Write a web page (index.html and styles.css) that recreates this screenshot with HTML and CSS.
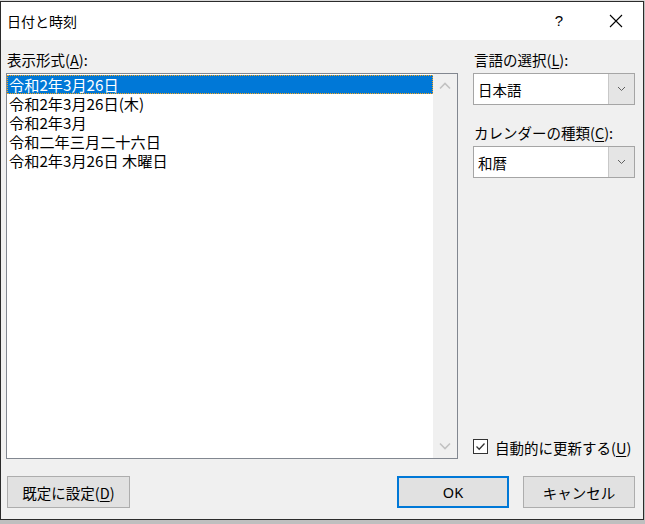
FILE: index.html
```html
<!DOCTYPE html>
<html lang="ja">
<head>
<meta charset="utf-8">
<title>日付と時刻</title>
<link rel="stylesheet" href="styles.css">
</head>
<body>
<div class="backdrop"></div>
<div class="dialog">
  <div class="titlebar">
    <div class="title">日付と時刻</div>
    <div class="tb-help">?</div>
    <div class="tb-close">
      <svg width="14" height="14" viewBox="0 0 14 14"><path d="M1 1 L13 13 M13 1 L1 13" stroke="#000" stroke-width="1.1" fill="none"/></svg>
    </div>
  </div>
  <div class="body">
    <div class="left">
      <div class="label">表示形式(<u>A</u>):</div>
      <div class="listbox">
        <div class="items">
          <div class="item selected">令和2年3月26日</div>
          <div class="item">令和2年3月26日(木)</div>
          <div class="item">令和2年3月</div>
          <div class="item">令和二年三月二十六日</div>
          <div class="item">令和2年3月26日 木曜日</div>
        </div>
        <div class="scrollbar">
          <div class="sb-btn">
            <svg width="12" height="8" viewBox="0 0 12 8"><polyline points="1,6.5 6,1.5 11,6.5" stroke="#c2c2c2" stroke-width="1.6" fill="none"/></svg>
          </div>
          <div class="sb-track"></div>
          <div class="sb-btn">
            <svg width="12" height="8" viewBox="0 0 12 8"><polyline points="1,1.5 6,6.5 11,1.5" stroke="#c2c2c2" stroke-width="1.6" fill="none"/></svg>
          </div>
        </div>
      </div>
    </div>
    <div class="right">
      <div class="label">言語の選択(<u>L</u>):</div>
      <div class="combo">
        <div class="combo-text">日本語</div>
        <div class="combo-btn">
          <svg width="9" height="6" viewBox="0 0 9 6"><polyline points="1,1 4.5,4.5 8,1" stroke="#606060" stroke-width="1" fill="none"/></svg>
        </div>
      </div>
      <div class="label label2">カレンダーの種類(<u>C</u>):</div>
      <div class="combo">
        <div class="combo-text">和暦</div>
        <div class="combo-btn">
          <svg width="9" height="6" viewBox="0 0 9 6"><polyline points="1,1 4.5,4.5 8,1" stroke="#606060" stroke-width="1" fill="none"/></svg>
        </div>
      </div>
      <div class="spacer"></div>
      <div class="check-row">
        <div class="checkbox">
          <svg width="13" height="13" viewBox="0 0 13 13"><polyline points="2.5,6.5 5.2,9.2 10.5,3.5" stroke="#333" stroke-width="1.3" fill="none"/></svg>
        </div>
        <div class="check-label">自動的に更新する(<u>U</u>)</div>
      </div>
    </div>
    <div class="buttons">
      <div class="btn btn-default">既定に設定(<u>D</u>)</div>
      <div class="btn-group">
        <div class="btn btn-ok">OK</div>
        <div class="btn">キャンセル</div>
      </div>
    </div>
  </div>
</div>
</body>
</html>
```
FILE: styles.css
```css
html, body {
  margin: 0;
  padding: 0;
}
body {
  width: 645px;
  height: 524px;
  background: #bfbfbf;
  font-family: "Noto Sans CJK JP", "Noto Sans", sans-serif;
  color: #000;
  overflow: hidden;
  position: relative;
}
.backdrop {
  height: 1px;
  background: #d9d9d9;
}
.dialog {
  width: 642px;
  height: 517px;
  border: 1px solid #2b2b2b;
  display: flex;
  flex-direction: column;
  background: #f0f0f0;
}
.titlebar {
  height: 38px;
  background: #fff;
  display: flex;
  align-items: center;
}
.title {
  flex: 1;
  padding-left: 6px;
  font-size: 14px;
  line-height: 20px;
  padding-bottom: 1px;
}
.tb-help {
  width: 40px;
  text-align: center;
  font-size: 15px;
  line-height: 20px;
  margin-right: 14px;
  font-family: "Liberation Sans", sans-serif;
}
.tb-close {
  width: 46px;
  display: flex;
  justify-content: center;
  align-items: center;
  margin-right: 4px;
}
.body {
  flex: 1;
  display: grid;
  grid-template-columns: 452px 162px;
  grid-template-rows: 1fr 32px;
  column-gap: 15px;
  row-gap: 17px;
  padding: 10px 8px 11px 5px;
}
.label {
  font-size: 14.5px;
  line-height: 20px;
  height: 20px;
  margin-bottom: 3px;
  padding-left: 1px;
  white-space: nowrap;
}
.label u, .check-label u, .btn u {
  text-decoration-thickness: 1px;
  text-underline-offset: 2px;
}
.left {
  display: flex;
  flex-direction: column;
  min-height: 0;
}
.listbox {
  flex: 1;
  border: 1px solid #828790;
  background: #fff;
  display: flex;
  min-height: 0;
}
.items {
  flex: 1;
  padding-top: 1px;
}
.item {
  height: 19px;
  line-height: 19px;
  font-size: 15.2px;
  padding-left: 2px;
  white-space: nowrap;
  box-sizing: border-box;
}
.item.selected {
  background: #0078d7;
  color: #fff;
  outline: 1px dotted #f7a51c;
  outline-offset: -1px;
}
.scrollbar {
  width: 24px;
  background: #f0f0f0;
  display: flex;
  flex-direction: column;
}
.sb-btn {
  height: 24px;
  display: flex;
  align-items: center;
  justify-content: center;
}
.sb-track {
  flex: 1;
}
.right {
  display: flex;
  flex-direction: column;
}
.label2 {
  margin-top: 18px;
}
.combo {
  height: 32px;
  box-sizing: border-box;
  border: 1px solid #a5a5a5;
  background: #fff;
  display: flex;
}
.combo-text {
  flex: 1;
  font-size: 14.5px;
  line-height: 30px;
  padding-left: 4px;
  padding-top: 1px;
}
.combo-btn {
  width: 25px;
  background: #e5e5e5;
  border-left: 1px solid #c8c8c8;
  display: flex;
  align-items: center;
  justify-content: center;
}
.spacer {
  flex: 1;
}
.check-row {
  display: flex;
  align-items: flex-start;
  height: 20px;
  margin-bottom: 1px;
}
.checkbox {
  width: 13px;
  height: 13px;
  border: 1px solid #333;
  background: #fff;
  margin-top: 1px;
  margin-right: 7px;
  display: flex;
}
.check-label {
  font-size: 14.5px;
  line-height: 20px;
  white-space: nowrap;
}
.buttons {
  grid-column: 1 / 3;
  display: flex;
  justify-content: space-between;
  padding-left: 1px;
}
.btn-group {
  display: flex;
  gap: 14px;
}
.btn {
  width: 112px;
  height: 32px;
  box-sizing: border-box;
  border: 1px solid #adadad;
  background: #e1e1e1;
  font-size: 14.5px;
  display: flex;
  align-items: center;
  justify-content: center;
  white-space: nowrap;
}
.btn-default {
  width: 123px;
}
.btn-ok {
  border: 2px solid #0078d7;
  font-family: "Noto Sans", sans-serif;
}
```
